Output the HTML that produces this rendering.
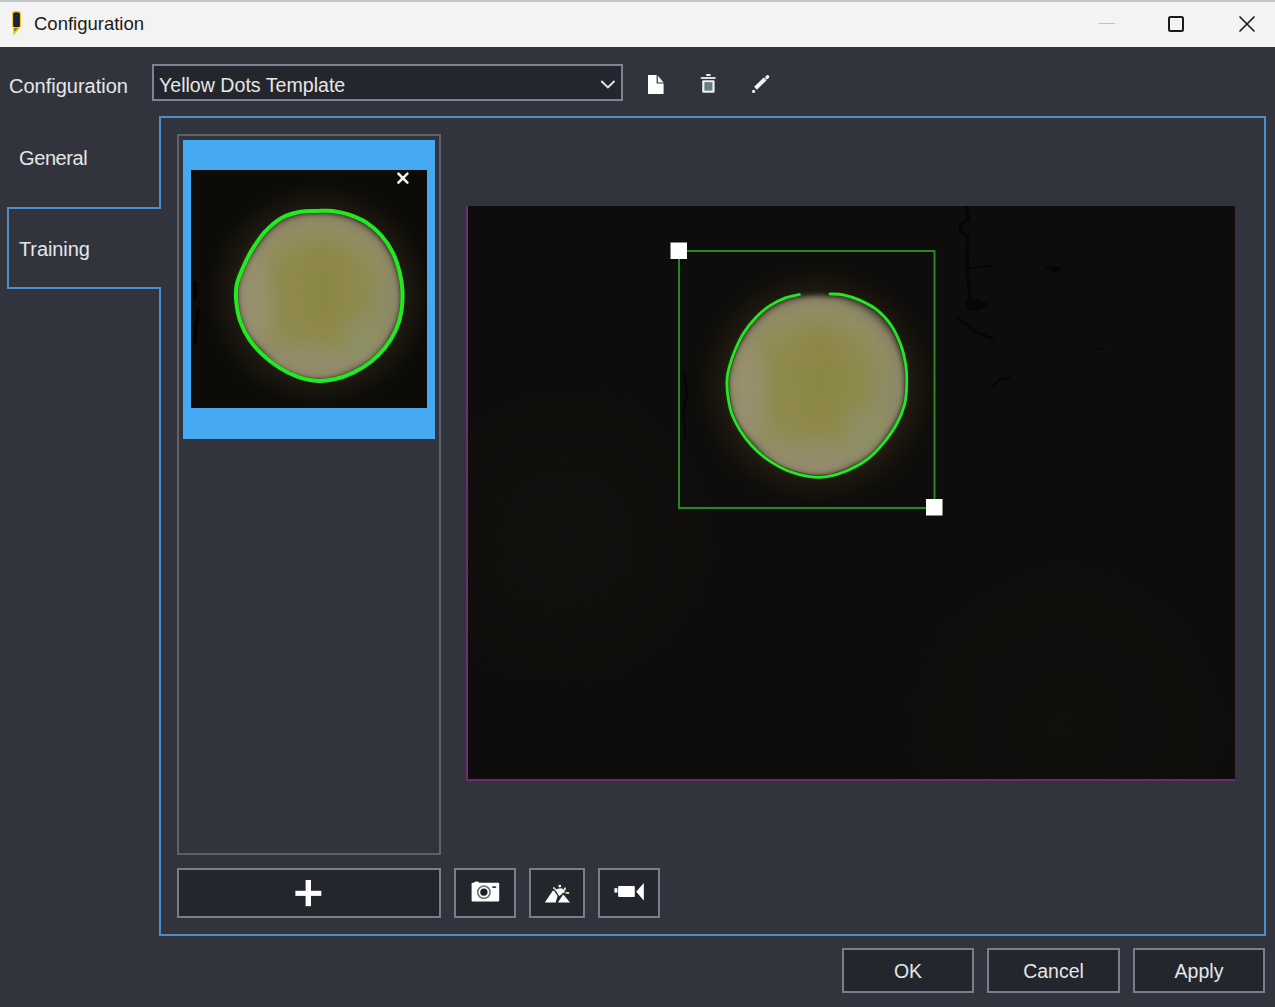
<!DOCTYPE html>
<html><head><meta charset="utf-8">
<style>
html,body{margin:0;padding:0;width:1275px;height:1007px;overflow:hidden;background:#31343c;font-family:"Liberation Sans",sans-serif;}
.a{position:absolute;box-sizing:border-box;}
svg.a{overflow:visible;}
#title{left:0;top:0;width:1275px;height:47px;background:#f3f3f3;}
#tline{left:0;top:0;width:1275px;height:2px;background:#c3c7cc;}
.lbl{color:#e6e6e6;font-size:20px;line-height:24px;white-space:nowrap;}
#combo{left:152px;top:64px;width:471px;height:37px;background:#23262d;border:2px solid #7a8696;}
#panel{left:159px;top:116px;width:1107px;height:820px;border:2px solid #4f8dc6;}
#tabsel{left:7px;top:207px;width:154px;height:82px;border:2px solid #4f8dc6;border-right:none;background:#31343c;}
#list{left:177px;top:134px;width:264px;height:721px;border:2px solid #5d6168;}
#item{left:183px;top:140px;width:252px;height:299px;background:#45a9f2;}
#thumb{left:190px;top:170px;width:237px;height:238px;background:#0b0a08;overflow:hidden;}
#main{left:466px;top:206px;width:770px;height:575px;background:#0d0c0b;overflow:hidden;}
.btn{background:#23262d;border:2px solid #76808c;}
.bt{position:absolute;left:0;right:0;color:#e6e6e6;font-size:19.5px;line-height:24px;text-align:center;}
</style></head><body>
<div class="a" id="title"><div class="a" id="tline"></div>
  <svg class="a" style="left:10px;top:8px" width="14" height="28" viewBox="0 0 14 28">
    <rect x="2" y="3" width="9" height="17" rx="2.5" fill="#f2c81c"/>
    <path d="M2.8 19.5 L10.2 19.5 L3.6 27.5 Z" fill="#f2c81c"/>
    <path d="M4.4 20.2 L7.6 20.2 L4.6 23.6 Z" fill="#7a5a10"/>
    <rect x="3.2" y="4.4" width="6.6" height="14.6" rx="1.6" fill="#15130a"/>
    <rect x="4.3" y="6" width="4.3" height="12" rx="1" fill="#15264a"/>
  </svg>
  <div class="a" style="left:34px;top:12px;font-size:18.5px;line-height:24px;color:#1b1b1b;white-space:nowrap">Configuration</div>
  <div class="a" style="left:1099px;top:23px;width:16px;height:1px;background:#c2c2c2"></div>
  <div class="a" style="left:1168px;top:16px;width:16px;height:16px;border:2px solid #1b1b1b;border-radius:2.5px"></div>
  <svg class="a" style="left:1239px;top:16px" width="16" height="16" viewBox="0 0 16 16"><path d="M0.5 0.5 L15.5 15.5 M15.5 0.5 L0.5 15.5" stroke="#1b1b1b" stroke-width="1.6"/></svg>
</div>
<div class="a lbl" style="left:9px;top:74px">Configuration</div>
<div class="a" id="combo">
  <div class="a lbl" style="left:5px;top:7px;font-size:19.6px">Yellow Dots Template</div>
  <svg class="a" style="left:447px;top:14px" width="14" height="9" viewBox="0 0 14 9"><path d="M0.3 1 L6.9 7.5 L13.5 1" stroke="#e6e6e6" stroke-width="1.9" fill="none"/></svg>
</div>
<!-- toolbar icons -->
<svg class="a" style="left:647px;top:74px" width="18" height="22" viewBox="0 0 18 22">
  <path d="M1 1 H9.6 V9.6 H16.6 V20 H1 Z" fill="#ffffff"/>
  <path d="M10.8 1.4 V8.4 H16.6 Z" fill="#f2f0f5"/>
</svg>
<svg class="a" style="left:698px;top:72px" width="20" height="22" viewBox="0 0 20 22">
  <rect x="8" y="2" width="4.8" height="1.9" rx="0.9" fill="#e8e8e8"/>
  <rect x="2.6" y="5" width="15.2" height="2" rx="1" fill="#dedede"/>
  <rect x="4.2" y="8.2" width="12.4" height="12.6" rx="1.2" fill="#f0f0f0"/>
  <rect x="6.4" y="10.2" width="8" height="8.4" fill="#6e7a78"/>
  <rect x="9.6" y="10.2" width="2" height="8.4" fill="#5a88a8"/>
</svg>
<svg class="a" style="left:748px;top:72px" width="24" height="24" viewBox="0 0 24 24">
  <line x1="7.5" y1="16.3" x2="17.2" y2="6.9" stroke="#f4f4f4" stroke-width="4"/>
  <line x1="18.9" y1="5.5" x2="19.6" y2="4.8" stroke="#f0f0f0" stroke-width="3.4" stroke-linecap="round"/>
  <circle cx="5.6" cy="19.4" r="1.7" fill="#e8e8e8"/>
</svg>

<div class="a" id="panel"></div>
<div class="a" id="tabsel"></div>
<div class="a lbl" style="left:19px;top:146px;letter-spacing:-0.4px">General</div>
<div class="a lbl" style="left:19px;top:237px;letter-spacing:-0.1px">Training</div>
<div class="a" id="list"></div>
<div class="a" id="item"></div>
<!--THUMB--><svg class="a" style="left:191px;top:170px;overflow:hidden" width="236" height="238" viewBox="1 0 236 238">
 <defs>
  <filter id="th" filterUnits="userSpaceOnUse" x="-42.46259955387427" y="-45.96259955387427" width="343.1251991077486" height="343.1251991077486" color-interpolation-filters="sRGB"><feGaussianBlur stdDeviation="8.6"/></filter>
  <filter id="ts" filterUnits="userSpaceOnUse" x="-42.46259955387427" y="-45.96259955387427" width="343.1251991077486" height="343.1251991077486" color-interpolation-filters="sRGB"><feGaussianBlur stdDeviation="2.5"/></filter>
  <filter id="tm" filterUnits="userSpaceOnUse" x="-42.46259955387427" y="-45.96259955387427" width="343.1251991077486" height="343.1251991077486" color-interpolation-filters="sRGB"><feGaussianBlur stdDeviation="7.7"/></filter>
  <clipPath id="tc"><path d="M127.6 43.4 C122.4 43.5 116.9 43.0 111.0 44.1 C105.2 45.3 98.5 46.8 92.7 50.1 C86.9 53.5 81.1 58.6 76.2 64.0 C71.4 69.3 67.0 76.5 63.5 82.3 C60.0 88.1 57.6 93.3 55.3 98.8 C52.9 104.2 50.3 109.7 49.2 115.2 C48.1 120.7 48.2 125.9 48.8 131.7 C49.3 137.5 50.3 143.9 52.5 150.0 C54.6 156.1 58.0 162.8 61.6 168.3 C65.3 173.7 69.5 178.3 74.4 182.9 C79.3 187.5 85.4 192.2 90.9 195.7 C96.4 199.2 101.6 201.9 107.4 204.0 C113.2 206.1 119.6 207.8 125.7 208.3 C131.8 208.8 137.9 208.1 144.0 206.7 C150.1 205.4 156.5 203.1 162.3 200.3 C168.1 197.6 173.6 194.4 178.8 190.3 C184.0 186.2 189.3 180.9 193.4 175.7 C197.6 170.5 200.9 165.0 203.5 159.2 C206.1 153.4 207.9 147.2 208.9 140.8 C210.0 134.4 210.2 127.2 209.9 120.8 C209.6 114.3 208.6 108.5 207.1 102.4 C205.6 96.3 203.6 89.9 200.7 84.1 C197.9 78.2 194.1 72.4 189.8 67.5 C185.5 62.6 180.6 58.2 175.1 54.7 C169.6 51.2 162.3 48.4 156.8 46.6 C151.3 44.7 147.0 43.9 142.1 43.4 C137.2 42.8 132.7 43.3 127.6 43.4 Z"/></clipPath>
  <radialGradient id="tg" cx="129.10000000000002" cy="125.60000000000002" r="85.78129977693715" gradientUnits="userSpaceOnUse">
    <stop offset="0" stop-color="#8e8b48"/>
    <stop offset="0.5" stop-color="#8f8a4e"/>
    <stop offset="0.8" stop-color="#938d62"/>
    <stop offset="0.93" stop-color="#8a8466"/>
    <stop offset="1" stop-color="#5e5846"/>
  </radialGradient>
  <radialGradient id="thg" cx="129.10000000000002" cy="125.60000000000002" r="115.80475469886515" gradientUnits="userSpaceOnUse">
    <stop offset="0.68" stop-color="#2a2418"/>
    <stop offset="0.76" stop-color="#1c1810"/>
    <stop offset="0.88" stop-color="#13110b"/>
    <stop offset="1" stop-color="#0e0d0b" stop-opacity="0"/>
  </radialGradient>
 </defs>
 <rect width="237" height="238" fill="#0c0b07"/>
 
 <g fill="#020202" stroke="#020202" stroke-linecap="round">
  <path d="M5 113 L5 128" stroke-width="4" fill="none"/>
  <path d="M8 142 L6 158 L5 172" stroke-width="3.5" fill="none"/>
 </g>
 
 <circle cx="129.10000000000002" cy="125.60000000000002" r="115.80475469886515" fill="url(#thg)"/>
 <g filter="url(#ts)"><path d="M127.6 43.4 C122.4 43.5 116.9 43.0 111.0 44.1 C105.2 45.3 98.5 46.8 92.7 50.1 C86.9 53.5 81.1 58.6 76.2 64.0 C71.4 69.3 67.0 76.5 63.5 82.3 C60.0 88.1 57.6 93.3 55.3 98.8 C52.9 104.2 50.3 109.7 49.2 115.2 C48.1 120.7 48.2 125.9 48.8 131.7 C49.3 137.5 50.3 143.9 52.5 150.0 C54.6 156.1 58.0 162.8 61.6 168.3 C65.3 173.7 69.5 178.3 74.4 182.9 C79.3 187.5 85.4 192.2 90.9 195.7 C96.4 199.2 101.6 201.9 107.4 204.0 C113.2 206.1 119.6 207.8 125.7 208.3 C131.8 208.8 137.9 208.1 144.0 206.7 C150.1 205.4 156.5 203.1 162.3 200.3 C168.1 197.6 173.6 194.4 178.8 190.3 C184.0 186.2 189.3 180.9 193.4 175.7 C197.6 170.5 200.9 165.0 203.5 159.2 C206.1 153.4 207.9 147.2 208.9 140.8 C210.0 134.4 210.2 127.2 209.9 120.8 C209.6 114.3 208.6 108.5 207.1 102.4 C205.6 96.3 203.6 89.9 200.7 84.1 C197.9 78.2 194.1 72.4 189.8 67.5 C185.5 62.6 180.6 58.2 175.1 54.7 C169.6 51.2 162.3 48.4 156.8 46.6 C151.3 44.7 147.0 43.9 142.1 43.4 C137.2 42.8 132.7 43.3 127.6 43.4 Z" fill="url(#tg)"/></g>
 <g clip-path="url(#tc)"><g filter="url(#tm)">
   <ellipse cx="65.62183816506653" cy="129.88906498884688" rx="17.15625995538743" ry="42.89064988846857" fill="#9a9274" opacity="0.7"/>
   <ellipse cx="116.23280503345946" cy="194.22503982154973" rx="42.89064988846857" ry="17.15625995538743" fill="#958b6e" opacity="0.7"/>
   <ellipse cx="171.9906498884686" cy="168.4906498884686" rx="17.15625995538743" ry="24.018763937542403" fill="#8b9168" opacity="0.7"/>
   <ellipse cx="196.00941382601098" cy="129.88906498884688" rx="12.009381968771201" ry="24.018763937542403" fill="#878a6a" opacity="0.6"/>
   <ellipse cx="133.38906498884688" cy="117.0218700223063" rx="18.871885950926174" ry="42.89064988846857" fill="#86823e" opacity="0.4"/>
 </g></g>
 <path d="M127.5 40.9 C122.2 41.0 116.5 40.5 110.5 41.7 C104.5 42.9 97.6 44.5 91.6 47.9 C85.6 51.3 79.6 56.6 74.6 62.1 C69.6 67.6 65.0 74.9 61.4 80.9 C57.8 86.9 55.4 92.2 52.9 97.9 C50.5 103.6 47.8 109.2 46.7 114.9 C45.6 120.6 45.7 125.9 46.3 131.9 C46.9 137.9 47.9 144.5 50.1 150.8 C52.3 157.1 55.7 164.0 59.5 169.6 C63.3 175.3 67.7 180.0 72.7 184.7 C77.7 189.4 84.0 194.3 89.7 197.9 C95.4 201.5 100.7 204.2 106.7 206.4 C112.7 208.5 119.3 210.3 125.6 210.8 C131.9 211.3 138.1 210.6 144.4 209.2 C150.7 207.8 157.3 205.4 163.3 202.6 C169.3 199.8 175.0 196.5 180.3 192.3 C185.7 188.1 191.1 182.5 195.4 177.2 C199.6 171.8 203.1 166.2 205.8 160.2 C208.5 154.2 210.3 147.9 211.4 141.3 C212.5 134.7 212.7 127.2 212.4 120.6 C212.1 114.0 211.1 108.0 209.5 101.7 C207.9 95.4 205.9 88.8 202.9 82.8 C199.9 76.8 196.0 70.8 191.6 65.8 C187.2 60.8 182.2 56.2 176.5 52.6 C170.8 49.0 163.3 46.1 157.6 44.2 C151.9 42.2 147.5 41.5 142.5 40.9 C137.5 40.4 132.8 40.8 127.5 40.9 Z" fill="none" stroke="#22ea22" stroke-width="4" stroke-linejoin="round"/>
 <path d="M208.4 3.6 L217.4 12.6 M217.4 3.6 L208.4 12.6" stroke="#f4f4f4" stroke-width="2.6" stroke-linecap="round"/>
</svg><!--/THUMB-->
<!--MAIN--><svg class="a" style="left:466px;top:206px;overflow:hidden" width="769" height="575" viewBox="0 0 769 575">
 <defs>
  <filter id="mh" filterUnits="userSpaceOnUse" x="164.83973538756004" y="-6.060264612440051" width="371.6205292248801" height="371.6205292248801" color-interpolation-filters="sRGB"><feGaussianBlur stdDeviation="9.3"/></filter>
  <filter id="ms" filterUnits="userSpaceOnUse" x="164.83973538756004" y="-6.060264612440051" width="371.6205292248801" height="371.6205292248801" color-interpolation-filters="sRGB"><feGaussianBlur stdDeviation="2.5"/></filter>
  <filter id="mm" filterUnits="userSpaceOnUse" x="164.83973538756004" y="-6.060264612440051" width="371.6205292248801" height="371.6205292248801" color-interpolation-filters="sRGB"><feGaussianBlur stdDeviation="8.4"/></filter>
  <clipPath id="mc"><path d="M333.9 91.0 C329.1 91.7 325.2 92.4 320.3 94.3 C315.5 96.1 309.7 98.8 304.9 102.0 C300.1 105.3 295.6 109.3 291.4 113.7 C287.2 118.0 283.2 122.9 279.8 128.2 C276.5 133.5 273.6 139.7 271.2 145.5 C268.8 151.3 266.6 158.0 265.4 162.9 C264.1 167.7 263.7 169.9 263.5 174.4 C263.3 178.9 263.6 184.4 264.4 189.9 C265.2 195.4 266.3 201.8 268.3 207.3 C270.2 212.8 272.8 217.6 276.1 222.8 C279.3 227.9 283.1 233.3 287.6 238.1 C292.1 242.9 297.3 247.6 303.1 251.6 C308.9 255.7 315.6 259.6 322.3 262.3 C329.1 265.1 337.2 267.1 343.6 268.1 C350.0 269.1 354.8 269.1 360.9 268.1 C367.0 267.2 373.8 265.1 380.3 262.3 C386.7 259.6 393.7 256.0 399.5 251.6 C405.3 247.3 410.1 242.0 414.9 236.2 C419.8 230.5 424.9 223.4 428.4 216.9 C432.0 210.5 434.6 204.0 436.3 197.6 C437.9 191.2 438.0 184.8 438.2 178.3 C438.4 171.9 438.2 165.4 437.3 159.0 C436.3 152.5 434.9 146.1 432.5 139.7 C430.1 133.2 426.7 125.9 422.9 120.3 C419.0 114.6 414.5 109.8 409.3 105.8 C404.2 101.7 397.4 98.6 391.9 96.1 C386.4 93.7 381.1 92.3 376.4 91.3 C371.7 90.3 368.4 90.6 363.8 90.4 C359.3 90.1 354.0 89.6 349.1 89.7 C344.1 89.8 338.7 90.2 333.9 91.0 Z"/></clipPath>
  <radialGradient id="mg" cx="350.6500000000001" cy="179.75" r="92.90513230622003" gradientUnits="userSpaceOnUse">
    <stop offset="0" stop-color="#8e8b48"/>
    <stop offset="0.5" stop-color="#8f8a4e"/>
    <stop offset="0.8" stop-color="#938d62"/>
    <stop offset="0.93" stop-color="#8a8466"/>
    <stop offset="1" stop-color="#5e5846"/>
  </radialGradient>
  <radialGradient id="mhg" cx="350.6500000000001" cy="179.75" r="125.42192861339704" gradientUnits="userSpaceOnUse">
    <stop offset="0.68" stop-color="#2a2418"/>
    <stop offset="0.76" stop-color="#1c1810"/>
    <stop offset="0.88" stop-color="#13110b"/>
    <stop offset="1" stop-color="#0e0d0b" stop-opacity="0"/>
  </radialGradient>
  <radialGradient id="bgg1" cx="100" cy="330" r="160" gradientUnits="userSpaceOnUse"><stop offset="0" stop-color="#141310" stop-opacity="0.6"/><stop offset="1" stop-color="#161511" stop-opacity="0"/></radialGradient>
  <radialGradient id="bgg2" cx="600" cy="520" r="180" gradientUnits="userSpaceOnUse"><stop offset="0" stop-color="#12110e" stop-opacity="0.6"/><stop offset="1" stop-color="#13120f" stop-opacity="0"/></radialGradient>
 </defs>
 <rect width="770" height="575" fill="#0e0d0b"/>
 <rect width="770" height="575" fill="url(#bgg1)"/>
 <rect width="770" height="575" fill="url(#bgg2)"/>
 
 <g fill="#050505" stroke="#050505" stroke-linejoin="round" stroke-linecap="round" opacity="0.85">
  <path d="M500 1 L503 14 L494 18 L495 27 L502 30" stroke-width="4" fill="none"/>
  <path d="M502 30 L501 60 L504 92" stroke-width="3.5" fill="none"/>
  <path d="M504 62 L525 60" stroke-width="2" fill="none"/>
  <path d="M500 94 L510 94 L522 99 L510 104 L501 103 Z" stroke-width="2"/>
  <path d="M493 113 L510 126 L527 133" stroke-width="3" fill="none"/>
  <path d="M580 61 L594 62 L589 66 Z" stroke-width="2"/>
  <path d="M627 143 L638 143" stroke-width="1" fill="none"/>
  <path d="M527 181 L533 174 L543 172" stroke-width="2.5" fill="none"/>
  <path d="M219 168 L221 190 L217 205 L220 232" stroke-width="2" fill="none"/>
 </g>
 
 <circle cx="350.6500000000001" cy="179.75" r="125.42192861339704" fill="url(#mhg)"/>
 <g filter="url(#ms)"><path d="M333.9 91.0 C329.1 91.7 325.2 92.4 320.3 94.3 C315.5 96.1 309.7 98.8 304.9 102.0 C300.1 105.3 295.6 109.3 291.4 113.7 C287.2 118.0 283.2 122.9 279.8 128.2 C276.5 133.5 273.6 139.7 271.2 145.5 C268.8 151.3 266.6 158.0 265.4 162.9 C264.1 167.7 263.7 169.9 263.5 174.4 C263.3 178.9 263.6 184.4 264.4 189.9 C265.2 195.4 266.3 201.8 268.3 207.3 C270.2 212.8 272.8 217.6 276.1 222.8 C279.3 227.9 283.1 233.3 287.6 238.1 C292.1 242.9 297.3 247.6 303.1 251.6 C308.9 255.7 315.6 259.6 322.3 262.3 C329.1 265.1 337.2 267.1 343.6 268.1 C350.0 269.1 354.8 269.1 360.9 268.1 C367.0 267.2 373.8 265.1 380.3 262.3 C386.7 259.6 393.7 256.0 399.5 251.6 C405.3 247.3 410.1 242.0 414.9 236.2 C419.8 230.5 424.9 223.4 428.4 216.9 C432.0 210.5 434.6 204.0 436.3 197.6 C437.9 191.2 438.0 184.8 438.2 178.3 C438.4 171.9 438.2 165.4 437.3 159.0 C436.3 152.5 434.9 146.1 432.5 139.7 C430.1 133.2 426.7 125.9 422.9 120.3 C419.0 114.6 414.5 109.8 409.3 105.8 C404.2 101.7 397.4 98.6 391.9 96.1 C386.4 93.7 381.1 92.3 376.4 91.3 C371.7 90.3 368.4 90.6 363.8 90.4 C359.3 90.1 354.0 89.6 349.1 89.7 C344.1 89.8 338.7 90.2 333.9 91.0 Z" fill="url(#mg)"/></g>
 <g clip-path="url(#mc)"><g filter="url(#mm)">
   <ellipse cx="281.9002020933973" cy="184.395256615311" rx="18.581026461244004" ry="46.45256615311001" fill="#9a9274" opacity="0.7"/>
   <ellipse cx="336.7142301540671" cy="254.07410584497603" rx="46.45256615311001" ry="18.581026461244004" fill="#958b6e" opacity="0.7"/>
   <ellipse cx="397.1025661531101" cy="226.20256615311" rx="18.581026461244004" ry="26.01343704574161" fill="#8b9168" opacity="0.7"/>
   <ellipse cx="423.11600319885173" cy="184.395256615311" rx="13.006718522870806" ry="26.01343704574161" fill="#878a6a" opacity="0.6"/>
   <ellipse cx="355.2952566153111" cy="170.459486769378" rx="20.439129107368405" ry="46.45256615311001" fill="#86823e" opacity="0.4"/>
 </g></g>
 <path d="M364.2 87.9 C366.4 88.1 372.3 87.9 377.1 88.9 C381.9 89.9 387.4 91.4 393.0 93.9 C398.6 96.4 405.6 99.7 410.9 103.8 C416.2 107.9 420.8 112.9 424.8 118.7 C428.8 124.5 432.2 132.0 434.7 138.6 C437.2 145.2 438.7 151.8 439.7 158.4 C440.7 165.0 440.9 171.7 440.7 178.3 C440.5 184.9 440.4 191.5 438.7 198.1 C437.0 204.7 434.4 211.4 430.7 218.0 C427.1 224.6 421.8 231.9 416.8 237.9 C411.8 243.8 406.8 249.2 400.9 253.7 C394.9 258.2 387.7 261.9 381.1 264.7 C374.5 267.5 367.5 269.6 361.2 270.6 C354.9 271.6 350.0 271.6 343.4 270.6 C336.8 269.6 328.4 267.5 321.5 264.7 C314.6 261.9 307.7 257.8 301.7 253.7 C295.8 249.5 290.4 244.8 285.8 239.8 C281.2 234.9 277.2 229.3 273.9 224.0 C270.6 218.7 267.9 213.7 265.9 208.1 C263.9 202.5 262.7 195.8 261.9 190.2 C261.1 184.6 260.8 178.9 261.0 174.3 C261.2 169.7 261.6 167.4 262.9 162.4 C264.2 157.4 266.4 150.4 268.9 144.5 C271.4 138.6 274.3 132.1 277.8 126.7 C281.3 121.2 285.4 116.3 289.7 111.8 C294.0 107.3 298.6 103.2 303.6 99.9 C308.6 96.6 314.5 93.8 319.5 91.9 C324.5 90.0 331.1 89.1 333.4 88.5 " fill="none" stroke="#22ea22" stroke-width="2.8" stroke-linecap="round" stroke-linejoin="round"/>
 <path d="M213 45 H468.5 V302 H213 Z" fill="none" stroke="#228a22" stroke-width="2"/>
 <rect x="204.5" y="36.5" width="16.5" height="16.5" fill="#fff"/>
 <rect x="460" y="293" width="16.5" height="16.5" fill="#fff"/>
</svg><!--/MAIN-->
<div class="a" style="left:466px;top:206px;width:2px;height:575px;background:#6e2b72"></div>
<div class="a" style="left:466px;top:779px;width:769px;height:2px;background:#6e2b72"></div>

<!-- bottom buttons -->
<div class="a btn" style="left:177px;top:868px;width:264px;height:50px"></div>
<svg class="a" style="left:290px;top:875px" width="40" height="40" viewBox="0 0 40 40">
  <rect x="15.6" y="5" width="5.4" height="26.2" fill="#fff"/>
  <rect x="5.4" y="15.8" width="25.9" height="5.1" fill="#fff"/>
</svg>
<div class="a btn" style="left:454px;top:868px;width:62px;height:50px"></div>
<svg class="a" style="left:465px;top:875px" width="40" height="35" viewBox="0 0 40 35">
  <path d="M6.6 8.8 Q6.6 7.8 7.6 7.8 H9 Q9.5 6.6 11.5 6.6 Q13.6 6.6 14.4 7.8 H33.2 Q34.2 7.8 34.2 8.8 V25.6 Q34.2 26.6 33.2 26.6 H7.6 Q6.6 26.6 6.6 25.6 Z" fill="#ffffff"/>
  <circle cx="18.9" cy="17.2" r="6.2" fill="none" stroke="#6e747a" stroke-width="1.6"/>
  <circle cx="18.9" cy="17.2" r="3.6" fill="#1c2028"/>
  <rect x="27.1" y="11.3" width="4.2" height="1.8" rx="0.9" fill="#3a3e44"/>
</svg>
<div class="a btn" style="left:529px;top:868px;width:56px;height:50px"></div>
<svg class="a" style="left:537px;top:875px" width="40" height="35" viewBox="0 0 40 35">
  <line x1="16.9" y1="13" x2="18.6" y2="15" stroke="#e8e4d4" stroke-width="1.9" stroke-linecap="round"/>
  <line x1="28" y1="13.3" x2="27.3" y2="15.2" stroke="#e8e4d4" stroke-width="1.9" stroke-linecap="round"/>
  <line x1="29.4" y1="17.9" x2="31.4" y2="17.9" stroke="#e8e4d4" stroke-width="1.9" stroke-linecap="round"/>
  <circle cx="22.8" cy="11.1" r="1.45" fill="#eef2f8"/>
  <path d="M18.4 14.8 Q21.8 12.6 25.2 13.4 Q27.4 14.8 27.8 17.2 L21.8 21.2 Z" fill="#f6f6f2"/>
  <path d="M6.7 28.1 L15.5 15.2 L17.3 15 L21.2 20.9 L19 28.1 Z" fill="#ffffff" stroke="#23262d" stroke-width="1.1" stroke-linejoin="round"/>
  <path d="M19.8 28.1 L26.2 18.4 L34.2 28.1 Z" fill="#ffffff" stroke="#23262d" stroke-width="1.1" stroke-linejoin="round"/>
</svg>
<div class="a btn" style="left:598px;top:868px;width:62px;height:50px"></div>
<svg class="a" style="left:608px;top:875px" width="42" height="35" viewBox="0 0 42 35">
  <rect x="6.3" y="12.9" width="3.2" height="4.8" rx="1.2" fill="#e8ecf4"/>
  <rect x="10.1" y="11.1" width="16.7" height="10.8" rx="0.8" fill="#fff"/>
  <path d="M28.2 16.7 L35.8 8 V25.4 Z" fill="#fff"/>
</svg>

<div class="a btn" style="left:842px;top:948px;width:132px;height:45px"><div class="bt" style="top:9px">OK</div></div>
<div class="a btn" style="left:987px;top:948px;width:133px;height:45px"><div class="bt" style="top:9px">Cancel</div></div>
<div class="a btn" style="left:1133px;top:948px;width:132px;height:45px"><div class="bt" style="top:9px">Apply</div></div>
</body></html>
